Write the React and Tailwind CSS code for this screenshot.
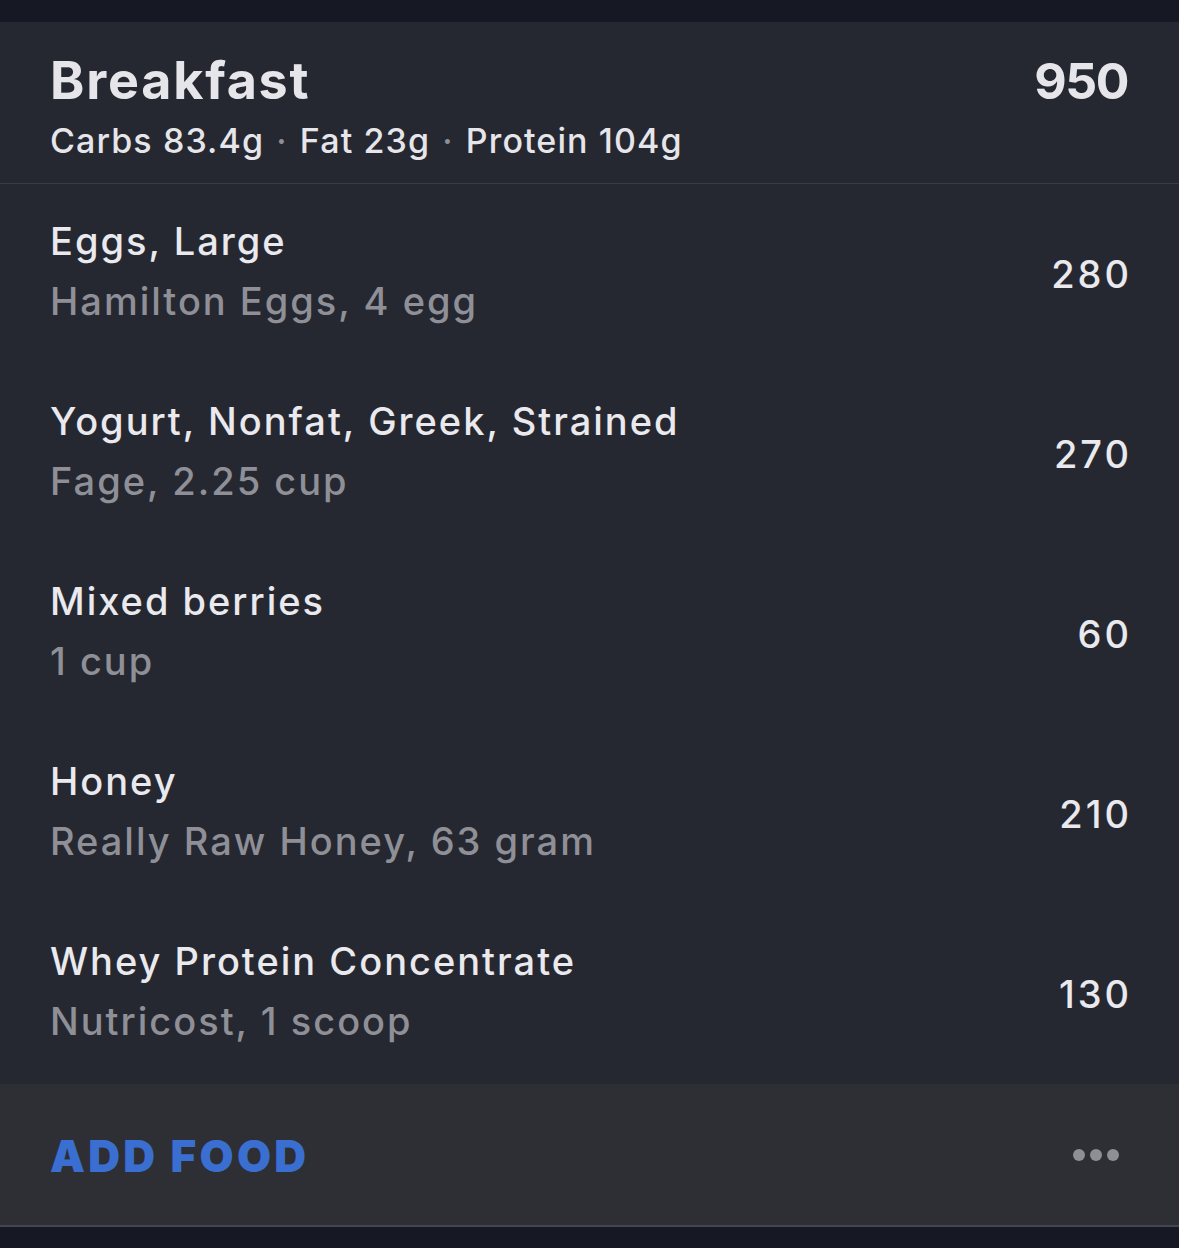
import React from 'react';

const items = [
  { name: 'Eggs, Large', detail: 'Hamilton Eggs, 4 egg', cal: 280 },
  { name: 'Yogurt, Nonfat, Greek, Strained', detail: 'Fage, 2.25 cup', cal: 270 },
  { name: 'Mixed berries', detail: '1 cup', cal: 60 },
  { name: 'Honey', detail: 'Really Raw Honey, 63 gram', cal: 210 },
  { name: 'Whey Protein Concentrate', detail: 'Nutricost, 1 scoop', cal: 130 },
];

const font = { fontFamily: 'Inter, "Noto Sans", sans-serif' };

const Dot = () => <span className="text-[#8e8f96] mx-[2px]">·</span>;

export default function App() {
  return (
    <div className="w-[1179px] h-[1248px] bg-[#161824] pt-[22px] flex flex-col" style={font}>
      {/* Header */}
      <div className="bg-[#262831] border-b border-[#3a3c45] h-[162px] pl-[50px] pr-[50px] flex justify-between">
        <div className="pt-[29px]">
          <h1 className="text-[52px] leading-[60px] font-bold text-[#e6e6ea] tracking-[1.8px]">Breakfast</h1>
          <p className="text-[34px] leading-[40px] font-medium text-[#e6e6ea] tracking-[1.1px] mt-[10px]">
            Carbs 83.4g <Dot /> Fat 23g <Dot /> Protein 104g
          </p>
        </div>
        <div className="pt-[29px] text-[50px] leading-[60px] font-bold text-[#e6e6ea] tracking-[-1.5px] mr-[1px]">950</div>
      </div>

      {/* Items */}
      <div className="bg-[#262831]">
        {items.map((item) => (
          <div key={item.name} className="h-[180px] pl-[50px] pr-[50px] flex items-center justify-between">
            <div className="mt-[-7px]">
              <div className="text-[38px] leading-[60px] font-medium text-[#e9e9ee] tracking-[2px]">{item.name}</div>
              <div className="text-[38px] leading-[60px] font-medium text-[#8f9097] tracking-[2px]">{item.detail}</div>
            </div>
            <div className="text-[38px] leading-[60px] font-medium text-[#e9e9ee] tracking-[3px] mr-[-3px]">{item.cal}</div>
          </div>
        ))}
      </div>

      {/* Footer */}
      <div className="bg-[#2e2f35] h-[143px] border-b-2 border-[#44464e] pl-[50px] pr-[60px] flex items-center justify-between">
        <button className="text-[44px] font-black text-[#3a6fd1] tracking-[3.3px] leading-none mt-[2px]">ADD FOOD</button>
        <div className="flex gap-[5px]">
          <span className="w-[12px] h-[12px] rounded-full bg-[#8e8e93]" />
          <span className="w-[12px] h-[12px] rounded-full bg-[#8e8e93]" />
          <span className="w-[12px] h-[12px] rounded-full bg-[#8e8e93]" />
        </div>
      </div>
      <div className="flex-1 bg-[#161824]" />
    </div>
  );
}
